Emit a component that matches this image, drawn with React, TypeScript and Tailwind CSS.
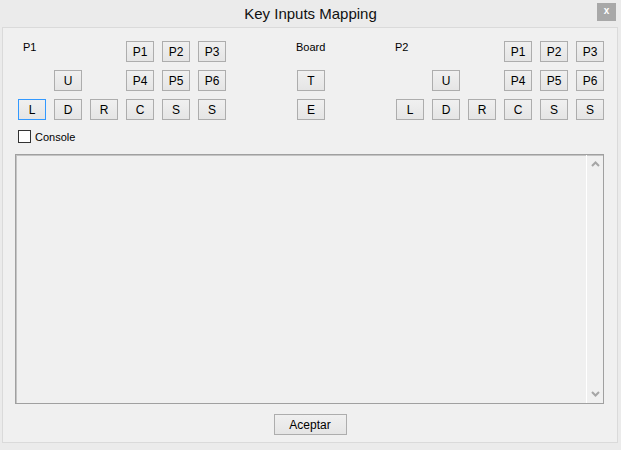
import React from "react";

type KeyButtonProps = {
  label: string;
  focused?: boolean;
};

const KeyButton = ({ label, focused }: KeyButtonProps) => (
  <button
    className={
      focused
        ? "w-[28px] h-[21px] flex items-center justify-center border border-[#3399ff] bg-gradient-to-b from-[#f0f0f0] to-[#e5e5e5] text-[12px] text-black leading-none"
        : "w-[28px] h-[21px] flex items-center justify-center border border-[#adadad] bg-gradient-to-b from-[#f0f0f0] to-[#e5e5e5] text-[12px] text-black leading-none"
    }
  >
    {label}
  </button>
);

type PlayerGroupProps = {
  title: string;
  focusLeft?: boolean;
  titleClass: string;
};

// 6 columns x 3 rows, like the original dialog
const PlayerGroup = ({ title, focusLeft, titleClass }: PlayerGroupProps) => (
  <div className="grid grid-cols-[repeat(6,28px)] grid-rows-[repeat(3,21px)] gap-x-2 gap-y-2">
    <div className={titleClass}>{title}</div>
    <KeyButton label="P1" />
    <KeyButton label="P2" />
    <KeyButton label="P3" />
    <div />
    <KeyButton label="U" />
    <div />
    <KeyButton label="P4" />
    <KeyButton label="P5" />
    <KeyButton label="P6" />
    <KeyButton label="L" focused={focusLeft} />
    <KeyButton label="D" />
    <KeyButton label="R" />
    <KeyButton label="C" />
    <KeyButton label="S" />
    <KeyButton label="S" />
  </div>
);

const Chevron = ({ up }: { up?: boolean }) => (
  <svg width="9" height="6" viewBox="0 0 9 6">
    <polyline
      points={up ? "1,5 4.5,1.5 8,5" : "1,1 4.5,4.5 8,1"}
      fill="none"
      stroke="#a6a6a6"
      strokeWidth="2"
    />
  </svg>
);

export default function App() {
  return (
    <div className="w-[621px] h-[450px] bg-[#ebebeb] font-['Liberation_Sans',Arial,sans-serif] text-black overflow-hidden">
      <div className="relative h-[27px] flex items-center justify-center">
        <span className="text-[15px] pt-[1px] text-[#111]">Key Inputs Mapping</span>
        <div className="absolute right-[5px] top-[3px] w-[19px] h-[18px] bg-[#a8a8a8] flex items-center justify-center text-white text-[10px] font-bold leading-none pb-[2px]">
          x
        </div>
      </div>

      <div className="ml-[2px] w-[616px] h-[416px] border border-[#dadada] bg-[#f0f0f0] flex flex-col">
        <div className="flex pt-[13px] pl-[15px]">
          <PlayerGroup
            title="P1"
            focusLeft
            titleClass="col-span-3 text-[11px] leading-[14px] whitespace-nowrap pl-[5px] -mt-[1px]"
          />
          <div className="ml-[71px] grid grid-cols-[28px] grid-rows-[repeat(3,21px)] gap-y-2">
            <div className="text-[11px] leading-[14px] whitespace-nowrap -ml-[1px] -mt-[1px]">Board</div>
            <KeyButton label="T" />
            <KeyButton label="E" />
          </div>
          <div className="ml-[71px]">
            <PlayerGroup
              title="P2"
              titleClass="col-span-3 text-[11px] leading-[14px] whitespace-nowrap -ml-[1px] -mt-[1px]"
            />
          </div>
        </div>

        <div className="flex items-center mt-[10px] pl-[15px] h-[13px]">
          <div className="w-[13px] h-[13px] border border-[#333333] bg-white" />
          <span className="ml-[4px] text-[11px] leading-none pt-[1px]">Console</span>
        </div>

        <div className="ml-[12px] mt-[11px] w-[589px] h-[250px] border border-[#a0a0a0] shadow-[inset_1px_1px_0_#c4c4c4] flex">
          <div className="flex-1" />
          <div className="w-[17px] border-l border-white flex flex-col items-center justify-between py-[6px]">
            <Chevron up />
            <Chevron />
          </div>
        </div>

        <div className="flex justify-center mt-[10px]">
          <button className="w-[73px] h-[21px] border border-[#adadad] bg-gradient-to-b from-[#f0f0f0] to-[#e5e5e5] text-[12px] leading-none">
            Aceptar
          </button>
        </div>
      </div>
    </div>
  );
}
